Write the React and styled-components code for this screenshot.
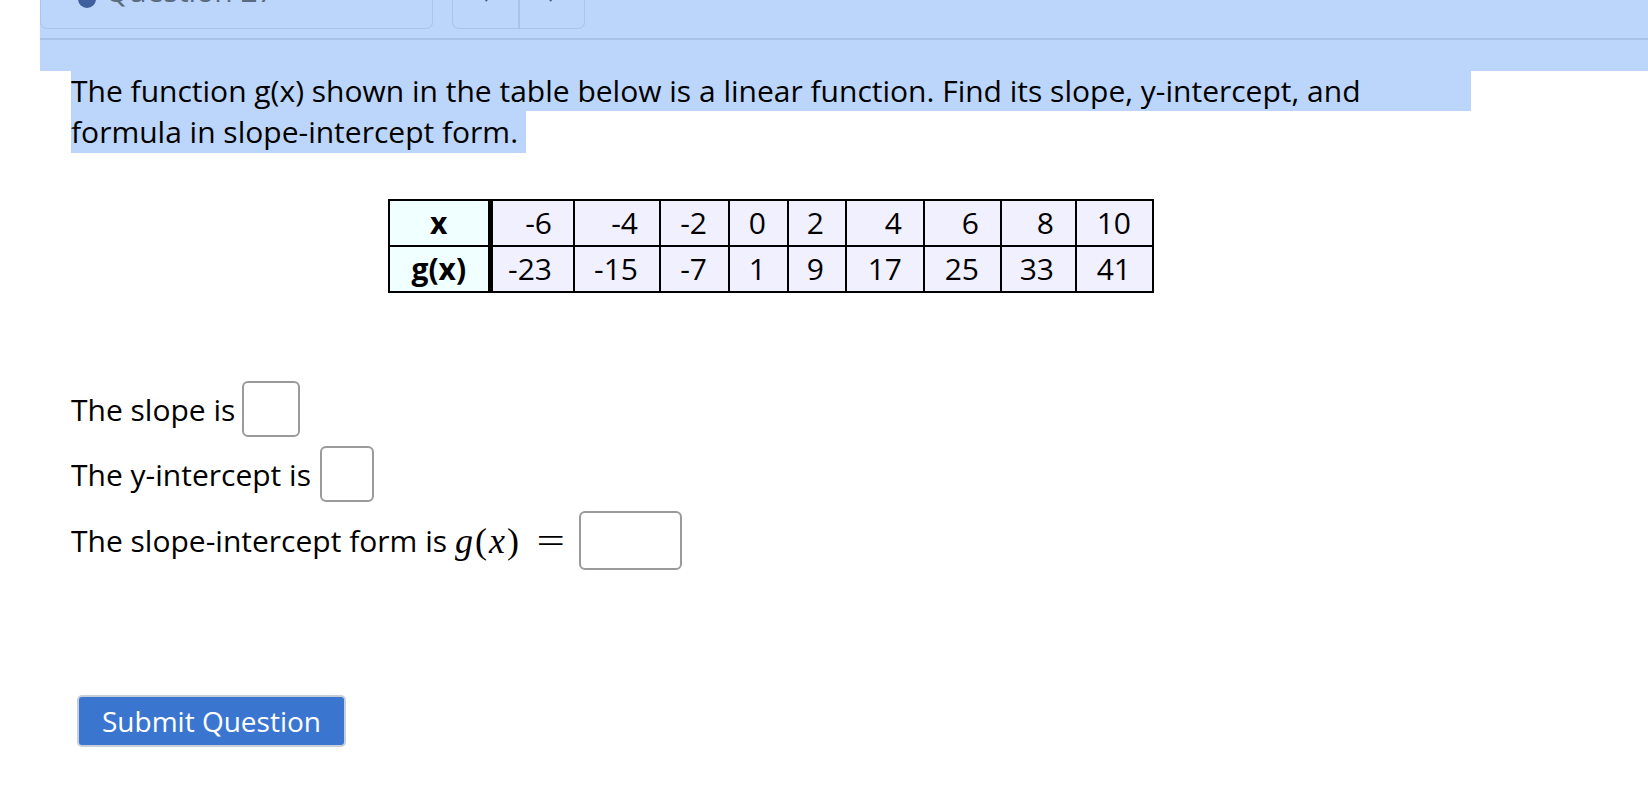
import React from 'react'
import styled, { createGlobalStyle } from 'styled-components'

const GlobalStyle = createGlobalStyle`
  html, body {
    margin: 0;
    padding: 0;
    background: #ffffff;
  }
  body {
    font-family: 'Open Sans', 'Noto Sans', 'Liberation Sans', sans-serif;
    color: #000000;
  }
`

const highlight = '#bbd6fa'

const Page = styled.div`
  width: 1648px;
  height: 798px;
  overflow: hidden;
`

const Header = styled.div`
  margin-left: 40px;
  height: 71px;
  background: ${highlight};
`

const Nav = styled.div`
  display: flex;
  gap: 19px;
  height: 29px;
`

const QuestionCard = styled.div`
  width: 393px;
  height: 29px;
  box-sizing: border-box;
  border: 1px solid #a9c4ec;
  border-top: none;
  border-radius: 0 0 7px 7px;
  overflow: hidden;
  display: flex;
  align-items: flex-end;
  gap: 9px;
  padding-left: 37px;
`

const Dot = styled.span`
  width: 18px;
  height: 18px;
  border-radius: 50%;
  background: #3f5f9e;
  margin-bottom: 20px;
  flex: none;
`

const CardLabel = styled.span`
  font-size: 30px;
  line-height: 30px;
  color: #5b6b80;
  margin-bottom: 22px;
  white-space: nowrap;
`

const ButtonGroup = styled.div`
  width: 133px;
  height: 29px;
  box-sizing: border-box;
  border: 1px solid #a9c4ec;
  border-top: none;
  border-radius: 0 0 7px 7px;
  display: flex;
  overflow: hidden;
`

const NavButton = styled.div`
  flex: 1;
  display: flex;
  justify-content: center;
  align-items: flex-end;
  & + & {
    border-left: 2px solid #a9c4ec;
  }
  svg {
    margin-bottom: 26px;
  }
`

const Rule = styled.div`
  margin-top: 9px;
  height: 2px;
  background: #a6c2e9;
`

const Body = styled.div`
  padding-left: 71px;
`

const Prompt = styled.div`
  width: 1400px;
  font-size: 30px;
  line-height: 40px;
`

const FullLine = styled.div`
  background: ${highlight};
`

const LastLine = styled.span`
  display: inline-block;
  background: ${highlight};
  padding-right: 8px;
  line-height: 42px;
`

const TableWrap = styled.div`
  width: 1400px;
  display: flex;
  justify-content: center;
  margin-top: 46px;
`

const Table = styled.table`
  border-collapse: collapse;
  table-layout: fixed;
  font-size: 30px;
`

const Cell = styled.td`
  border: 2px solid #000000;
  height: 44px;
  padding: 0 21px 0 0;
  text-align: right;
  background: #f0f0ff;
  box-sizing: border-box;
  line-height: 44px;
  white-space: nowrap;
`

const HeadCell = styled(Cell)`
  background: #f0ffff;
  text-align: center;
  padding: 0;
  font-weight: 700;
  border-right: 5px solid #000000;
`

const Answers = styled.div`
  margin-top: 88px;
  font-size: 30px;
  display: flex;
  flex-direction: column;
  gap: 9px;
`

const AnswerRow = styled.div`
  display: flex;
  align-items: center;
  height: ${p => p.$h || 56}px;
  white-space: nowrap;
`

const Box = styled.span`
  display: inline-block;
  box-sizing: border-box;
  width: ${p => p.$w}px;
  height: ${p => p.$h}px;
  border: 2px solid #9a9a9a;
  border-radius: 6px;
  margin-left: ${p => p.$ml || 7}px;
  background: #ffffff;
`

const MathExpr = styled.span`
  font-family: 'Liberation Serif', 'DejaVu Serif', serif;
  font-size: 36px;
  margin-left: 8px;
  display: inline-flex;
  align-items: baseline;
  letter-spacing: 2px;
`

const Var = styled.i`
  font-style: italic;
`

const Eq = styled.span`
  display: inline-block;
  margin-left: 20px;
  transform: scaleX(1.4);
`

const SubmitButton = styled.button`
  margin-top: 125px;
  margin-left: 6px;
  width: 269px;
  height: 52px;
  box-sizing: border-box;
  background: #3a76cf;
  color: #ffffff;
  border: 2px solid #c9cfd8;
  border-radius: 5px;
  font-family: 'Open Sans', 'Noto Sans', sans-serif;
  font-size: 28px;
  text-align: left;
  padding: 0 0 0 23px;
  cursor: pointer;
`

const columns = [
  { x: '-6', g: '-23', w: 84 },
  { x: '-4', g: '-15', w: 86 },
  { x: '-2', g: '-7', w: 69 },
  { x: '0', g: '1', w: 59 },
  { x: '2', g: '9', w: 58 },
  { x: '4', g: '17', w: 78 },
  { x: '6', g: '25', w: 77 },
  { x: '8', g: '33', w: 75 },
  { x: '10', g: '41', w: 77 },
]

const Chevron = ({ dir }) => (
  <svg width="12" height="14" viewBox="0 0 12 14">
    <path
      d={dir === 'left' ? 'M8 1 L3 7 L8 13' : 'M4 1 L9 7 L4 13'}
      fill="none"
      stroke="#4a5a72"
      strokeWidth="2"
    />
  </svg>
)

export default function App() {
  return (
    <Page>
      <GlobalStyle />
      <Header>
        <Nav>
          <QuestionCard>
            <Dot />
            <CardLabel>Question 27</CardLabel>
          </QuestionCard>
          <ButtonGroup>
            <NavButton>
              <Chevron dir="left" />
            </NavButton>
            <NavButton>
              <Chevron dir="right" />
            </NavButton>
          </ButtonGroup>
        </Nav>
        <Rule />
      </Header>
      <Body>
        <Prompt>
          <FullLine>
            The function g(x) shown in the table below is a linear function. Find its slope, y-intercept, and
          </FullLine>
          <LastLine>formula in slope-intercept form.</LastLine>
        </Prompt>
        <TableWrap>
          <Table>
            <colgroup>
              <col style={{ width: 101 }} />
              {columns.map(c => (
                <col key={c.x} style={{ width: c.w }} />
              ))}
            </colgroup>
            <tbody>
              <tr>
                <HeadCell>x</HeadCell>
                {columns.map(c => (
                  <Cell key={c.x}>{c.x}</Cell>
                ))}
              </tr>
              <tr>
                <HeadCell>g(x)</HeadCell>
                {columns.map(c => (
                  <Cell key={c.g}>{c.g}</Cell>
                ))}
              </tr>
            </tbody>
          </Table>
        </TableWrap>
        <Answers>
          <AnswerRow>
            The slope is<Box $w={58} $h={56} />
          </AnswerRow>
          <AnswerRow>
            The y-intercept is<Box $w={54} $h={56} $ml={9} />
          </AnswerRow>
          <AnswerRow $h={59}>
            The slope-intercept form is
            <MathExpr>
              <Var>g</Var>(<Var>x</Var>)<Eq>=</Eq>
            </MathExpr>
            <Box $w={103} $h={59} $ml={16} />
          </AnswerRow>
        </Answers>
        <SubmitButton>Submit Question</SubmitButton>
      </Body>
    </Page>
  )
}
